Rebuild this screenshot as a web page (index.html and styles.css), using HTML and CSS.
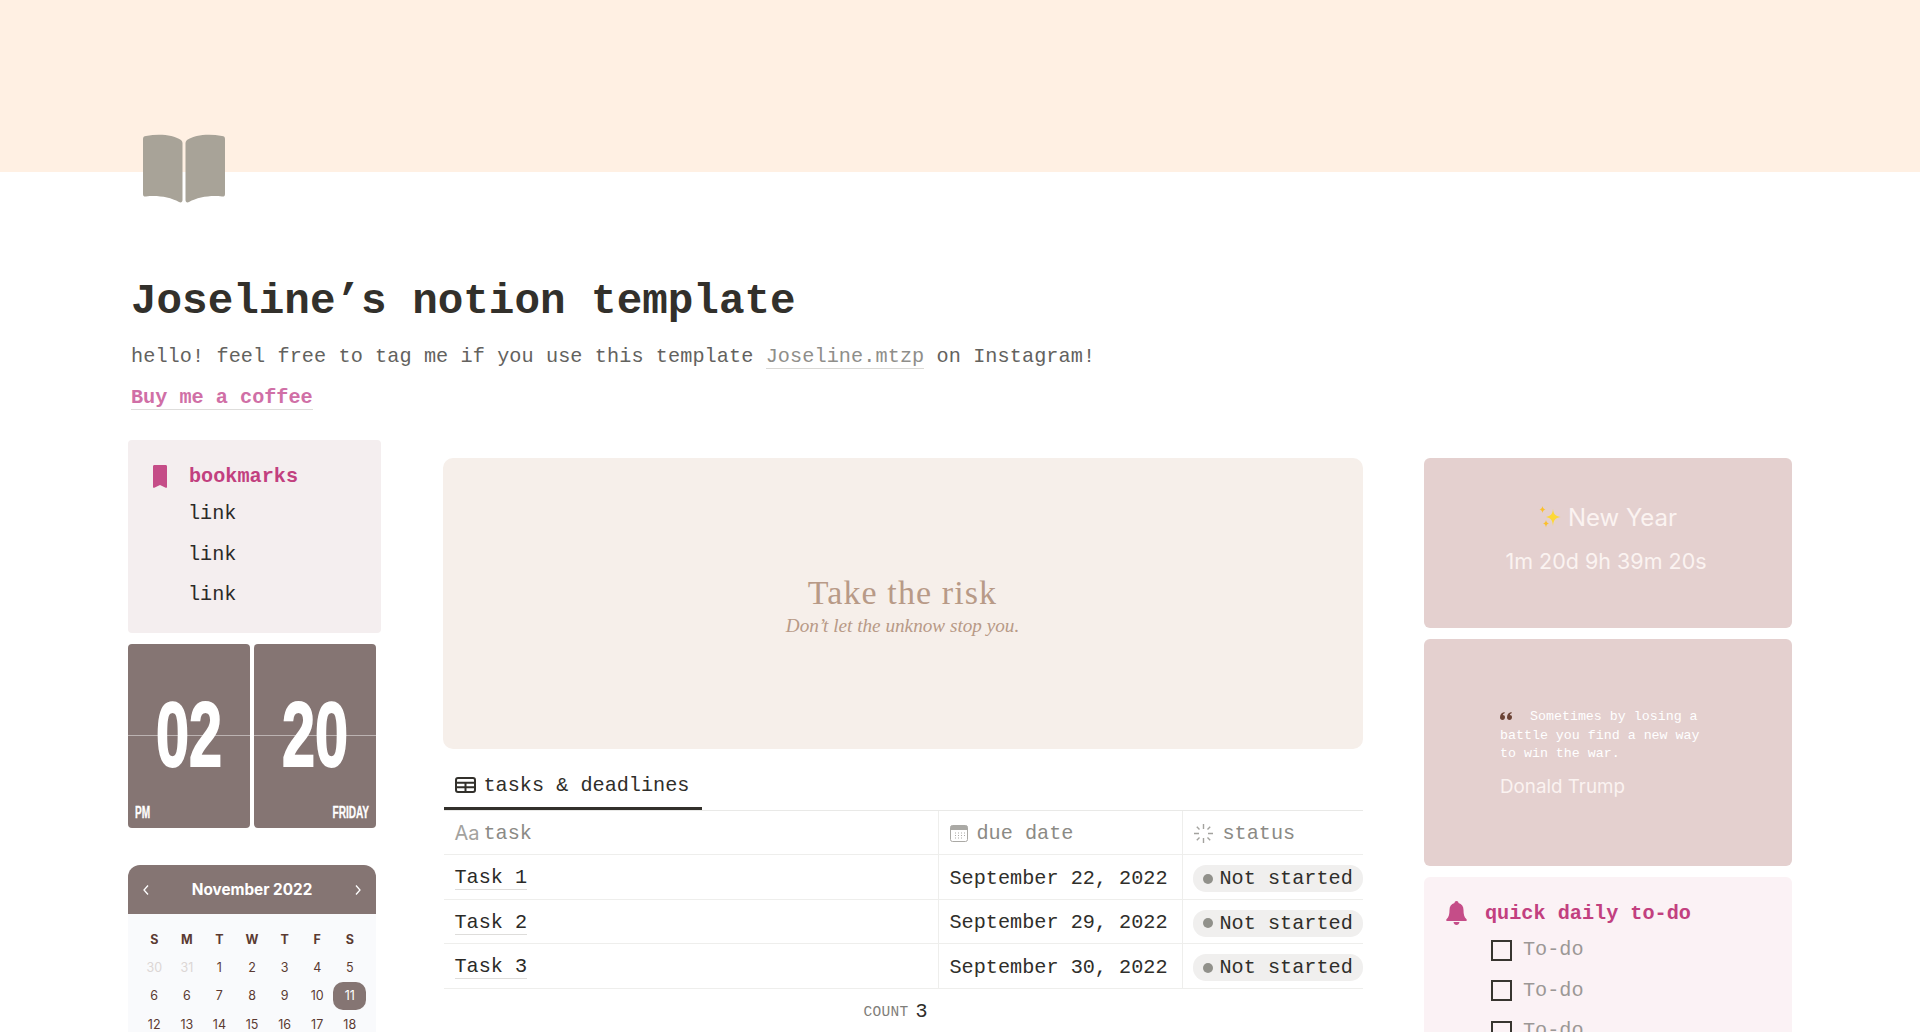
FILE: index.html
```html
<!DOCTYPE html>
<html>
  <head>
    <meta charset="UTF-8" />
    <title>Joseline’s notion template</title>
    <link rel="stylesheet" href="styles.css">
  </head>

  <body>
    <div class="cover"></div>

    <main class="page">
      <svg class="pageIcon" viewBox="0 0 84 70" aria-hidden="true">
        <path d="M1 5 C1 3 2 2 4 2 C18 -0.5 31 1 39 6 C40 7 40.5 8 40.5 9 L40.5 66 C40.5 68 39 69 37 68 C28 63 15 61 4 62.5 C2 62.7 1 62 1 60 Z" />
        <path d="M83 5 C83 3 82 2 80 2 C66 -0.5 53 1 45 6 C44 7 43.5 8 43.5 9 L43.5 66 C43.5 68 45 69 47 68 C56 63 69 61 80 62.5 C82 62.7 83 62 83 60 Z" />
      </svg>

      <h1>Joseline’s notion template</h1>
      <p class="intro introText">hello! feel free to tag me if you use this template <a class="grayLink" href="#">Joseline.mtzp</a> on Instagram!</p>
      <p class="intro"><a class="coffee" href="#">Buy me a coffee</a></p>

      <div class="columns">
        <section class="leftCol">
          <div class="bookmarks">
            <div class="calloutTitle">
              <svg class="bookmarkIcon" viewBox="0 0 14 23" aria-hidden="true">
                <path d="M1.5 0 H12.5 C13.5 0 14 .6 14 1.5 V22 C14 22.8 13.3 23 12.7 22.7 L7 20 L1.3 22.7 C.7 23 0 22.8 0 22 V1.5 C0 .6 .5 0 1.5 0 Z" />
              </svg>
              <span>bookmarks</span>
            </div>
            <div class="bookmarkLinks">
              <div class="bookmarkLink">link</div>
              <div class="bookmarkLink">link</div>
              <div class="bookmarkLink">link</div>
            </div>
          </div>

          <div class="flipClock">
            <div class="flipCard">
              <span class="flipDigits">02</span>
              <span class="flipLabel">PM</span>
            </div>
            <div class="flipCard">
              <span class="flipDigits">20</span>
              <span class="flipLabel flipLabelRight">FRIDAY</span>
            </div>
          </div>

          <div class="calendar">
            <div class="calendarHead">
              <svg class="chevron" viewBox="0 0 8 12" aria-hidden="true"><path d="M6 1.5 L2 6 L6 10.5" /></svg>
              <span>November 2022</span>
              <svg class="chevron" viewBox="0 0 8 12" aria-hidden="true"><path d="M2 1.5 L6 6 L2 10.5" /></svg>
            </div>
            <div class="calendarGrid">
              <b>S</b><b>M</b><b>T</b><b>W</b><b>T</b><b>F</b><b>S</b>
              <span class="muted">30</span><span class="muted">31</span><span>1</span><span>2</span><span>3</span><span>4</span><span>5</span>
              <span>6</span><span>6</span><span>7</span><span>8</span><span>9</span><span>10</span><span class="today">11</span>
              <span>12</span><span>13</span><span>14</span><span>15</span><span>16</span><span>17</span><span>18</span>
            </div>
          </div>
        </section>

        <section class="midCol">
          <div class="hero">
            <div class="heroTitle">Take the risk</div>
            <div class="heroSub">Don’t let the unknow stop you.</div>
          </div>

          <div class="tabs">
            <div class="tab">
              <svg class="tableIcon" viewBox="0 0 21 16" aria-hidden="true">
                <rect x="1" y="1" width="19" height="14" rx="2" />
                <path d="M1 5.7 H20 M1 10.3 H20 M10.5 5.7 V15" />
              </svg>
              <span>tasks &amp; deadlines</span>
            </div>
          </div>

          <div class="row headRow">
            <div class="cell"><span class="aa">Aa</span>task</div>
            <div class="cell dueCell">
              <svg class="dateIcon" viewBox="0 0 18 17" aria-hidden="true">
                <rect x=".5" y=".5" width="17" height="16" rx="2" fill="#fff" stroke="#aaa9a5" />
                <path d="M.5 2.5 C.5 1.4 1.4 .5 2.5 .5 H15.5 C16.6 .5 17.5 1.4 17.5 2.5 V5 H.5 Z" fill="#aaa9a5" />
                <path d="M5 8 H6 M8 8 H9 M11 8 H12 M14 8 H15 M5 10.5 H6 M8 10.5 H9 M11 10.5 H12 M14 10.5 H15 M5 13 H6 M8 13 H9 M11 13 H12" stroke="#aaa9a5" />
              </svg>
              due date
            </div>
            <div class="cell statusCell">
              <svg class="spinIcon" viewBox="0 0 21 21" aria-hidden="true">
                <path d="M10.5 1 V6 M10.5 15 V20 M1 10.5 H6 M15 10.5 H20 M3.8 3.8 L6.5 6.5 M14.5 14.5 L17.2 17.2 M3.8 17.2 L6.5 14.5 M14.5 6.5 L17.2 3.8" />
              </svg>
              status
            </div>
          </div>

          <div class="row">
            <div class="cell"><span class="taskName">Task 1</span></div>
            <div class="cell dueCell">September 22, 2022</div>
            <div class="cell statusCell"><span class="pill"><i class="dot"></i>Not started</span></div>
          </div>
          <div class="row">
            <div class="cell"><span class="taskName">Task 2</span></div>
            <div class="cell dueCell">September 29, 2022</div>
            <div class="cell statusCell"><span class="pill"><i class="dot"></i>Not started</span></div>
          </div>
          <div class="row">
            <div class="cell"><span class="taskName">Task 3</span></div>
            <div class="cell dueCell">September 30, 2022</div>
            <div class="cell statusCell"><span class="pill"><i class="dot"></i>Not started</span></div>
          </div>

          <div class="countRow"><span class="countLabel">COUNT</span><span class="countValue">3</span></div>
        </section>

        <section class="rightCol">
          <div class="widget newYear">
            <div class="newYearTitle">
              <svg class="sparkles" viewBox="0 0 22 22" aria-hidden="true">
                <path d="M14 3 C14.5 8 16 10 21.5 11 C16 12 14.5 14 14 20 C13.5 14 12 12 7 11 C12 10 13.5 8 14 3 Z" fill="#fdd835" />
                <path d="M3.5 0 C3.8 2 4.5 3 6.5 3.5 C4.5 4 3.8 5 3.5 7 C3.2 5 2.5 4 .5 3.5 C2.5 3 3.2 2 3.5 0 Z" fill="#fbc02d" />
                <path d="M7 14 C7.3 16 8 17 10 17.5 C8 18 7.3 19 7 21.5 C6.7 19 6 18 4 17.5 C6 17 6.7 16 7 14 Z" fill="#fbc02d" />
              </svg>
              New Year
            </div>
            <div class="countdown">1m 20d 9h 39m 20s</div>
          </div>

          <div class="widget quote">
            <p class="quoteText">
              <svg class="quoteMark" viewBox="0 0 12 8" aria-hidden="true">
                <path d="M0 5.5 C0 2.5 1.5 .6 4.5 0 L4.7 1.2 C3.5 1.6 2.9 2.2 2.8 3 C4.2 3 5 3.9 5 5.3 C5 6.8 4 8 2.5 8 C1 8 0 7 0 5.5 Z M7 5.5 C7 2.5 8.5 .6 11.5 0 L11.7 1.2 C10.5 1.6 9.9 2.2 9.8 3 C11.2 3 12 3.9 12 5.3 C12 6.8 11 8 9.5 8 C8 8 7 7 7 5.5 Z" />
              </svg>Sometimes by losing a battle you find a new way to win the war.
            </p>
            <div class="quoteAuthor">Donald Trump</div>
          </div>

          <div class="todo">
            <div class="calloutTitle todoTitle">
              <svg class="bellIcon" viewBox="0 0 21 24" aria-hidden="true">
                <path d="M10.5 0 C11.7 0 12.5 .9 12.5 2 C15.8 2.9 17.5 5.5 17.5 9 C17.5 13.5 18.3 16 20.3 18 C21.2 18.9 20.8 20 19.7 20 H1.3 C.2 20 -.2 18.9 .7 18 C2.7 16 3.5 13.5 3.5 9 C3.5 5.5 5.2 2.9 8.5 2 C8.5 .9 9.3 0 10.5 0 Z M7.5 21 H13.5 C13.2 22.8 12 24 10.5 24 C9 24 7.8 22.8 7.5 21 Z" />
              </svg>
              <span>quick daily to-do</span>
            </div>
            <div class="todoItems">
              <div class="todoItem"><i class="checkbox"></i>To-do</div>
              <div class="todoItem"><i class="checkbox"></i>To-do</div>
              <div class="todoItem"><i class="checkbox"></i>To-do</div>
            </div>
          </div>
        </section>
      </div>
    </main>
  </body>
</html>
```

FILE: styles.css
```css
html,
body {
  height: 1032px;
  overflow: hidden;
}

body {
  margin: 0;
  background: #fff;
  color: #2f2e2a;
  font-family: "Liberation Mono", monospace;
  font-size: 20.2px;
}

a {
  text-decoration: none;
}

.cover {
  height: 172px;
  background: #fff0e3;
}

.page {
  padding: 0 128px;
}

.pageIcon {
  display: block;
  width: 84px;
  height: 70px;
  margin: -38px 0 0 14px;
  fill: #a8a398;
}

h1 {
  margin: 73px 0 14px 3px;
  color: #32302b;
  font-size: 42.6px;
  line-height: 50px;
  font-weight: 700;
}

.intro {
  margin: 0 0 9px 3px;
  color: #63625e;
  line-height: 32px;
}

.introText {
  letter-spacing: 0.09px;
}

.grayLink {
  color: #8f8e8a;
  border-bottom: 1px solid #d9d8d5;
}

.coffee {
  color: #d06fa6;
  font-weight: 700;
  border-bottom: 1px solid #dedddb;
}

.columns {
  display: grid;
  grid-template-columns: 253px 920px 368px;
  justify-content: space-between;
  margin-top: 26px;
}

/* left column */

.bookmarks {
  height: 193px;
  box-sizing: border-box;
  padding: 21px 25px 0;
  background: #f4eeef;
  border-radius: 4px;
}

.calloutTitle {
  display: flex;
  align-items: center;
  height: 30px;
  color: #c2407f;
  font-weight: 700;
}

.bookmarkIcon {
  width: 14px;
  height: 23px;
  margin-right: 22px;
  fill: #c54d88;
}

.bookmarkLinks {
  margin: 3px 0 0 35px;
}

.bookmarkLink {
  color: #2b2a27;
  line-height: 40.5px;
}

.flipClock {
  display: flex;
  gap: 4px;
  margin-top: 11px;
}

.flipCard {
  position: relative;
  display: flex;
  justify-content: center;
  width: 122px;
  height: 184px;
  overflow: hidden;
  background: #857573;
  border-radius: 4px;
}

.flipCard::after {
  content: "";
  position: absolute;
  top: 91px;
  left: 0;
  right: 0;
  height: 1px;
  background: rgba(255, 255, 255, 0.45);
}

.flipDigits {
  margin-top: 58px;
  color: #fff;
  font-family: "Liberation Sans", sans-serif;
  font-size: 90px;
  font-weight: 700;
  line-height: 66px;
  transform: scaleX(0.66);
  -webkit-text-stroke: 2px #fff;
}

.flipLabel {
  position: absolute;
  left: 7px;
  bottom: 8px;
  color: #fff;
  font-family: "Liberation Sans", sans-serif;
  font-size: 16px;
  font-weight: 700;
  line-height: 14px;
  transform: scaleX(0.63);
  transform-origin: left center;
  -webkit-text-stroke: 0.3px #fff;
}

.flipLabelRight {
  left: auto;
  right: 7px;
  transform-origin: right center;
}

.calendar {
  width: 248px;
  margin-top: 37px;
  background: #f9fafc;
  border-radius: 12px 12px 0 0;
  font-family: Inter, sans-serif;
}

.calendarHead {
  display: flex;
  align-items: center;
  justify-content: space-between;
  height: 49px;
  padding: 0 14px;
  background: #857573;
  border-radius: 12px 12px 0 0;
  color: #fff;
  font-size: 15.3px;
  font-weight: 700;
}

.chevron {
  width: 8px;
  height: 12px;
  fill: none;
  stroke: #fff;
  stroke-width: 1.3;
}

.calendarGrid {
  display: grid;
  grid-template-columns: repeat(7, 32.6px);
  grid-auto-rows: 28.3px;
  justify-content: center;
  align-items: center;
  justify-items: center;
  padding: 11px 0 0;
  color: #5b3a32;
  font-size: 12.5px;
}

.calendarGrid b {
  font-weight: 700;
}

.muted {
  color: #dcd6d5;
}

.today {
  width: 33px;
  line-height: 28px;
  text-align: center;
  background: #857573;
  border-radius: 10px;
  color: #fff;
}

/* middle column */

.midCol {
  padding-top: 18px;
}

.hero {
  display: flex;
  flex-direction: column;
  align-items: center;
  height: 291px;
  padding-top: 115px;
  box-sizing: border-box;
  background: #f6efea;
  border-radius: 10px;
  color: #b89a87;
  font-family: "Liberation Serif", serif;
}

.heroTitle {
  font-size: 34px;
  line-height: 40px;
  letter-spacing: 1.1px;
}

.heroSub {
  font-size: 19.2px;
  font-style: italic;
  line-height: 26px;
}

.tabs {
  margin: 11px 0 0 1px;
  border-bottom: 1px solid #e9e9e7;
}

.tab {
  display: flex;
  align-items: center;
  box-sizing: border-box;
  width: 258px;
  height: 50px;
  padding: 3px 0 0 11px;
  border-bottom: 3px solid #32302b;
}

.tableIcon {
  width: 21px;
  height: 16px;
  margin-right: 8px;
  fill: none;
  stroke: #32302b;
  stroke-width: 2;
}

.row {
  display: grid;
  grid-template-columns: 494px 244px 1fr;
  box-sizing: border-box;
  height: 44.5px;
  margin-left: 1px;
  border-bottom: 1.4px solid #eeeeec;
}

.headRow {
  height: 44px;
  color: #8b8a85;
}

.cell {
  display: flex;
  align-items: center;
  padding: 3px 0 0 11px;
  white-space: nowrap;
}

.headRow .cell {
  padding-top: 1px;
}

.dueCell,
.statusCell {
  border-left: 1.4px solid #eeeeec;
}

.statusCell {
  padding-left: 10px;
}

.aa {
  width: 29px;
  color: #a3a29e;
  font-family: Inter, sans-serif;
  font-size: 20px;
}

.dateIcon {
  width: 18px;
  height: 17px;
  margin-right: 9px;
}

.spinIcon {
  width: 21px;
  height: 21px;
  margin-right: 9px;
  fill: none;
  stroke: #a3a29e;
  stroke-width: 1.4;
}

.taskName {
  color: #2b2a27;
  border-bottom: 1px solid #dedddb;
}

.pill {
  display: flex;
  align-items: center;
  height: 27px;
  width: 170px;
  margin-top: 1px;
  padding-left: 10px;
  box-sizing: border-box;
  background: #f0efee;
  border-radius: 13px;
}

.dot {
  width: 10px;
  height: 10px;
  margin-right: 7px;
  background: #91918b;
  border-radius: 50%;
}

.countRow {
  display: flex;
  align-items: center;
  height: 46px;
  padding-left: 421px;
}

.countLabel {
  margin-right: 7px;
  color: #7f7e79;
  font-size: 14.5px;
  letter-spacing: 0.3px;
}

.countValue {
  font-size: 20px;
}

/* right column */

.rightCol {
  padding-top: 18px;
}

.widget {
  box-sizing: border-box;
  background: #e4d0cf;
  border-radius: 6px;
  color: #fbf3f1;
  font-family: Inter, sans-serif;
}

.newYear {
  height: 170px;
  padding-top: 44px;
  text-align: center;
}

.newYearTitle {
  display: flex;
  align-items: center;
  justify-content: center;
  height: 30px;
  font-size: 24px;
}

.sparkles {
  width: 22px;
  height: 22px;
  margin-right: 7px;
}

.countdown {
  margin-top: 14px;
  margin-left: -4px;
  font-size: 21.5px;
  line-height: 30px;
}

.quote {
  height: 227px;
  margin-top: 11px;
  padding: 69px 76px 0;
}

.quoteText {
  width: 210px;
  margin: 0;
  color: #fff;
  font-family: "Liberation Mono", monospace;
  font-size: 13.3px;
  line-height: 18.5px;
}

.quoteMark {
  width: 12px;
  height: 8px;
  margin-right: 18px;
  fill: #6b4235;
}

.quoteAuthor {
  margin-top: 9px;
  font-size: 18.8px;
  line-height: 28px;
}

.todo {
  height: 200px;
  margin-top: 11px;
  padding: 21px 22px 0;
  background: #fbf2f5;
  border-radius: 6px;
}

.bellIcon {
  width: 21px;
  height: 24px;
  margin-right: 18px;
  fill: #c54d88;
}

.todoItems {
  margin: 2px 0 0 45px;
}

.todoItem {
  display: flex;
  align-items: center;
  color: #9c9896;
  line-height: 40.5px;
}

.checkbox {
  box-sizing: border-box;
  width: 21px;
  height: 21px;
  margin-right: 11px;
  border: 2px solid #37352f;
}
```
